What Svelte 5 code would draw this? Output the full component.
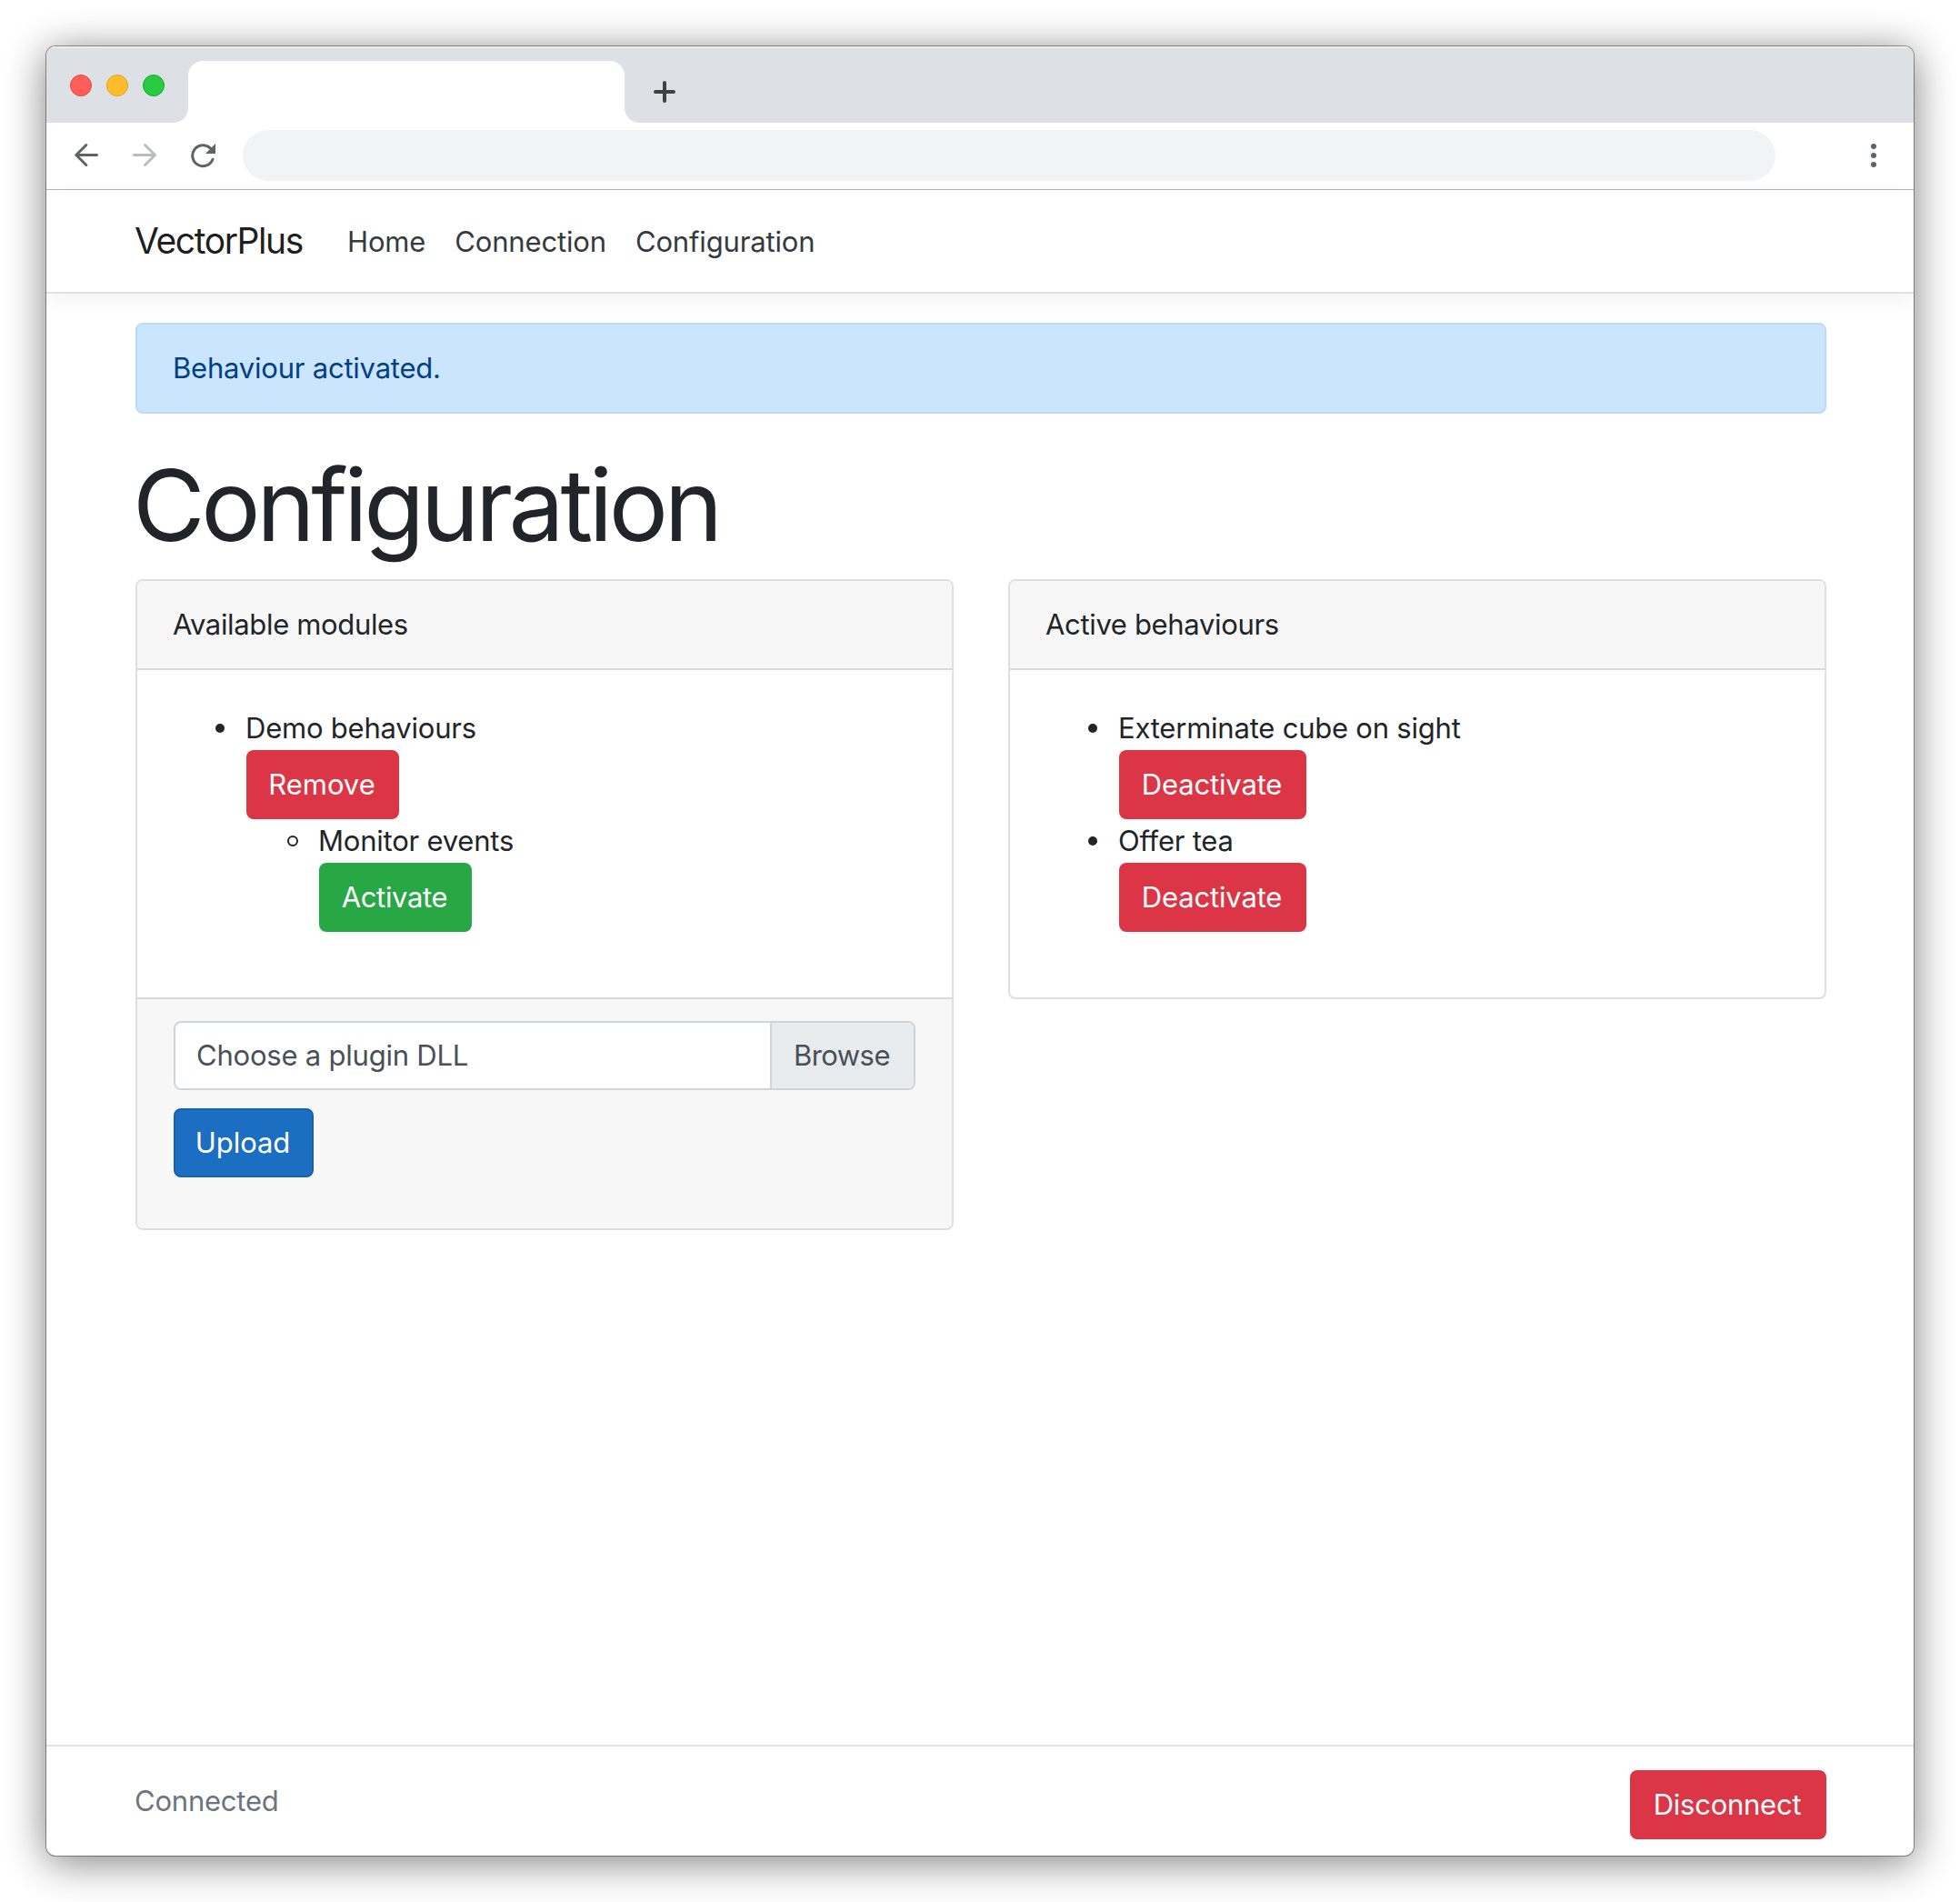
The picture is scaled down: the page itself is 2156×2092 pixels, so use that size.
<script>
  const links = ['Home', 'Connection', 'Configuration'];
  const active = ['Exterminate cube on sight', 'Offer tea'];
</script>

<div class="window">
  <div class="tabs">
    <div class="lights"><i class="red"></i><i class="amber"></i><i class="green"></i></div>
    <div class="tab"></div>
    <svg class="plus" width="24" height="24" viewBox="0 0 24 24"><path d="M12 2v20M2 12h20" /></svg>
  </div>
  <div class="toolbar">
    <svg class="nav-icons" width="156" height="28" viewBox="0 0 156 28">
      <path class="line" d="M24.500 13.500H1.800M12.800 2.500L1.800 13.500l11 11" />
      <path class="line off" d="M65.500 13.500h23M77.500 2.500l11 11l-11 11" />
      <path class="line" d="M152 18.200A11.500 11.500 0 1 1 149.300 6" />
      <path class="head" d="M155 1v11h-11z" />
    </svg>
    <div class="address"></div>
    <div class="dots"><i></i><i></i><i></i></div>
  </div>

  <header>
    <a class="brand" href="#top">VectorPlus</a>
    <nav>
      {#each links as link}<a href="#{link}">{link}</a>{/each}
    </nav>
  </header>

  <main>
    <div class="alert">Behaviour activated.</div>
    <h1>Configuration</h1>
    <div class="columns">
      <section class="card">
        <div class="card-head">Available modules</div>
        <div class="card-body">
          <ul>
            <li>Demo behaviours<button class="btn danger remove">Remove</button>
              <ul class="nested">
                <li>Monitor events<button class="btn success">Activate</button></li>
              </ul>
            </li>
          </ul>
        </div>
        <div class="card-foot">
          <div class="file"><span class="name">Choose a plugin DLL</span><span class="browse">Browse</span></div>
          <button class="btn primary">Upload</button>
        </div>
      </section>
      <section class="card">
        <div class="card-head">Active behaviours</div>
        <div class="card-body">
          <ul>
            {#each active as item}
              <li>{item}<button class="btn danger deactivate">Deactivate</button></li>
            {/each}
          </ul>
        </div>
      </section>
    </div>
  </main>

  <footer>
    <span>Connected</span>
    <button class="btn danger disconnect">Disconnect</button>
  </footer>
</div>

<style>
  :global(body) { background: #fff; }
  :global(#app) { display: flow-root; }
  * { box-sizing: border-box; }
  .window {
    width: 2054px; height: 1990px; margin: 51px; display: flex; flex-direction: column;
    background: #fff; border-radius: 10px; overflow: hidden;
    font: 430 31px/48px Inter, "Liberation Sans", sans-serif; letter-spacing: -.007em; color: #212529;
    box-shadow: 0 0 0 1px rgba(0,0,0,.36), 0 5px 44px rgba(0,0,0,.46), 0 16px 56px rgba(0,0,0,.08);
  }
  .tabs { height: 84px; background: #dde0e5; display: flex; align-items: flex-start; box-shadow: inset 0 2px rgba(255,255,255,.45); }
  .lights { display: flex; gap: 16px; padding: 31px 26px 0; width: 156px; flex: none; }
  .lights i { width: 24px; height: 24px; border-radius: 50%; flex: none; }
  .red { background: #ff5f57; border: 1px solid #e2463f; }
  .amber { background: #ffbd2e; border: 1px solid #e1a116; }
  .green { background: #28ca41; border: 1px solid #12ac28; }
  .tab { width: 480px; height: 68px; margin-top: 16px; background: #fff; border-radius: 16px 16px 0 0; flex: none; position: relative; }
  .tab::before, .tab::after { content: ""; position: absolute; bottom: 0; width: 16px; height: 16px; }
  .tab::before { left: -16px; background: radial-gradient(circle at 0 0, transparent 15.500px, #fff 16.200px); }
  .tab::after { right: -16px; background: radial-gradient(circle at 100% 0, transparent 15.500px, #fff 16.200px); }
  .plus { margin: 38px 0 0 32px; fill: none; stroke: #3f4245; stroke-width: 4; stroke-linecap: round; }
  .toolbar { height: 74px; border-bottom: 1px solid #b3b3b3; display: flex; align-items: flex-start; padding: 8px 41px 0 31px; }
  .nav-icons { margin: 14px 29px 0 0; flex: none; }
  .line { fill: none; stroke: #5f6368; stroke-width: 3; stroke-linecap: round; stroke-linejoin: round; }
  .off { stroke: #babcbe; }
  .head { fill: #5f6368; }
  .address { width: 1686px; height: 56px; border-radius: 28px; background: #f1f3f4; }
  .dots { margin: 15px 0 0 auto; display: grid; gap: 4px; }
  .dots i { width: 6px; height: 6px; border-radius: 50%; background: #5f6368; }
  header { height: 114px; border-bottom: 2px solid #dee2e6; box-shadow: 0 8px 24px rgba(0,0,0,.05); padding: 0 96px 0 97px; display: flex; align-items: center; }
  a { text-decoration: none; color: #343a40; }
  .brand { font-size: 39px; letter-spacing: -.036em; color: rgba(0,0,0,.9); width: 234px; }
  nav { display: flex; gap: 32px; letter-spacing: -.005em; padding-top: 1px; }
  main { flex: 1; padding: 32px 96px 0 98px; }
  .alert { height: 100px; border: 2px solid #b8daff; border-radius: 8px; background: #cce5ff; color: #004085; padding: 24px 39px; }
  h1 { margin: 33px 0 15px -3px; font-size: 109px; line-height: 134px; font-weight: 430; letter-spacing: -.040em; }
  .columns { display: grid; grid-template-columns: 900px 900px; gap: 60px; align-items: start; }
  .card { border: 2px solid #dfdfdf; border-radius: 8px; background: #fff; overflow: hidden; }
  .card-head { height: 98px; padding: 24px 39px; background: #f7f7f7; border-bottom: 2px solid #d9d9d9; letter-spacing: -.011em; }
  .card-body { padding: 40px; }
  ul { margin: 0 0 32px; padding-left: 80px; list-style: none; }
  li { text-indent: -1px; }
  li::before { content: ""; box-sizing: border-box; display: inline-block; width: 10px; height: 10px; margin: 0 23px 0 -33px; border-radius: 50%; background: #212529; vertical-align: 6px; }
  .nested { margin: 0; }
  .nested li::before { width: 12px; height: 12px; margin: 0 22px 0 -34px; border: 2px solid #212529; background: none; vertical-align: 5px; }
  .btn { display: block; height: 76px; border: 2px solid; border-radius: 8px; padding: 0 2px 0 0; font: inherit; letter-spacing: -.005em; text-indent: 0; color: #fff; text-align: center; }
  .danger { background: #dc3545; border-color: #dc3545; }
  .success { background: #28a745; border-color: #28a745; width: 168px; letter-spacing: -.011em; }
  .remove { width: 168px; letter-spacing: -.001em; }
  .deactivate { width: 206px; }
  .disconnect { width: 216px; letter-spacing: -.008em; }
  .primary { background: #1b6ec2; border-color: #1861ac; width: 154px; letter-spacing: -.002em; }
  .card-foot { height: 254px; padding: 24px 40px; border-top: 2px solid #d9d9d9; background: #f7f7f7; }
  .file { height: 76px; margin-bottom: 20px; border: 2px solid #ced4da; border-radius: 8px; background: #fff; color: #495057; display: flex; justify-content: space-between; line-height: 72px; overflow: hidden; }
  .name { padding-left: 23px; }
  .browse { width: 158px; border-left: 2px solid #ced4da; background: #e9ecef; padding-left: 24px; letter-spacing: -.018em; }
  footer { height: 122px; border-top: 2px solid #dee2e6; padding: 26px 96px 0 97px; display: flex; justify-content: space-between; align-items: flex-start; color: #6c757d; }
  footer span { line-height: 68px; }
</style>
